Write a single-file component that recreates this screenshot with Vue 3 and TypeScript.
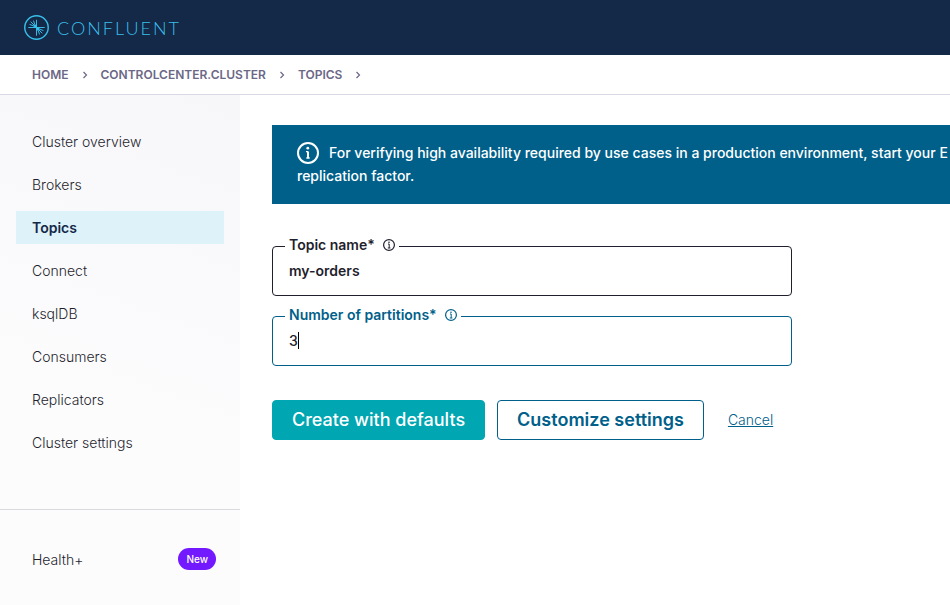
<script setup lang="ts">
import { ref } from 'vue'

interface NavItem {
  label: string
  active?: boolean
}

const crumbs: string[] = ['HOME', 'CONTROLCENTER.CLUSTER', 'TOPICS']

const navItems: NavItem[] = [
  { label: 'Cluster overview' },
  { label: 'Brokers' },
  { label: 'Topics', active: true },
  { label: 'Connect' },
  { label: 'ksqlDB' },
  { label: 'Consumers' },
  { label: 'Replicators' },
  { label: 'Cluster settings' },
]

const topicName = ref('my-orders')
const partitions = ref('3')
</script>

<template>
  <div class="app">
    <header class="topbar">
      <a class="brand" href="#">
        <svg class="brand-mark" viewBox="0 0 26 26" fill="none" stroke="currentColor">
          <circle cx="13" cy="13" r="12.200" stroke-width="1.500" />
          <path d="M13 5v16.500M4.500 13h17" stroke-width="1" />
          <path d="M12.500 12.500L7 7M12 12L5.800 9.800M12 12L9.800 5.800M13.500 13.500l5.500 5.500M14 14l6.200 2.200M14 14l2.200 6.200" stroke-width="1" />
          <path d="M13 9V13H9zM13 17V13h4z" fill="currentColor" stroke="none" />
        </svg>
        <span class="brand-name">CONFLUENT</span>
      </a>
    </header>

    <nav class="crumbs">
      <template v-for="crumb in crumbs" :key="crumb">
        <a class="crumb" href="#">{{ crumb }}</a>
        <svg class="chevron" viewBox="0 0 6 8" fill="none" stroke="currentColor" stroke-width="1.2">
          <path d="M1.500 1L4.500 4L1.500 7" />
        </svg>
      </template>
    </nav>

    <div class="body">
      <aside class="sidebar">
        <nav class="nav">
          <a
            v-for="item in navItems"
            :key="item.label"
            class="nav-link"
            :class="{ active: item.active }"
            href="#"
          >{{ item.label }}</a>
        </nav>
        <nav class="nav nav-extra">
          <a class="nav-link health" href="#">Health+<span class="badge">New</span></a>
        </nav>
      </aside>

      <main class="main">
        <div class="banner">
          <div class="banner-row">
            <svg class="banner-icon" viewBox="0 0 22 22" fill="none" stroke="currentColor">
              <circle cx="11" cy="11" r="10" stroke-width="2" />
              <path d="M11 9.500V16.500" stroke-width="2" />
              <path d="M9 9.700h2M9 16h4" stroke-width="1.200" />
              <circle cx="10.800" cy="6.200" r="1.400" fill="currentColor" stroke="none" />
            </svg>
            <span>For verifying high availability required by use cases in a production environment, start your E</span>
          </div>
          <div>replication factor.</div>
        </div>

        <form class="form" @submit.prevent>
          <div class="field">
            <label class="field-label" for="topic-name">
              Topic name*
              <svg class="info" viewBox="0 0 12 12" fill="none" stroke="currentColor">
                <circle cx="6" cy="6" r="5.400" stroke-width="1.200" />
                <path d="M5 5h1.200v4M4.800 9h2.600" stroke-width="1" />
                <circle cx="6" cy="3.200" r="0.800" fill="currentColor" stroke="none" />
              </svg>
            </label>
            <input id="topic-name" v-model="topicName" class="field-input" type="text" />
          </div>

          <div class="field focused">
            <label class="field-label" for="partitions">
              Number of partitions*
              <svg class="info" viewBox="0 0 12 12" fill="none" stroke="currentColor">
                <circle cx="6" cy="6" r="5.400" stroke-width="1.200" />
                <path d="M5 5h1.200v4M4.800 9h2.600" stroke-width="1" />
                <circle cx="6" cy="3.200" r="0.800" fill="currentColor" stroke="none" />
              </svg>
            </label>
            <input id="partitions" v-model="partitions" class="field-input" type="text" />
            <span class="caret" aria-hidden="true"></span>
          </div>

          <div class="actions">
            <button class="btn primary" type="submit">Create with defaults</button>
            <button class="btn outline" type="button">Customize settings</button>
            <a class="cancel" href="#">Cancel</a>
          </div>
        </form>
      </main>
    </div>
  </div>
</template>

<style>
body {
  margin: 0;
  background: #fff;
}
</style>

<style scoped>
.app {
  min-height: 100vh;
  display: flex;
  flex-direction: column;
  overflow: hidden;
  font-family: Inter, "Liberation Sans", sans-serif;
  font-size: 14px;
  line-height: 17px;
  color: #1f1f2e;
}

.app *,
.app {
  box-sizing: border-box;
}

a {
  color: inherit;
  text-decoration: none;
}

.topbar {
  height: 55px;
  padding: 0 24px;
  display: flex;
  align-items: center;
  background: #142848;
}

.brand {
  display: flex;
  align-items: center;
  gap: 8px;
  color: #38bfe8;
}

.brand-mark {
  width: 25px;
  height: 25px;
}

.brand-name {
  font-family: Lato, "Liberation Sans", sans-serif;
  font-size: 18px;
  line-height: 20px;
  font-weight: 300;
  letter-spacing: 2px;
}

.crumbs {
  height: 40px;
  padding: 0 32px;
  display: flex;
  align-items: center;
  gap: 13px;
  border-bottom: 1px solid #d9d9e5;
  font-size: 12px;
  font-weight: 600;
  color: #6b6786;
}

.chevron {
  width: 6px;
  height: 8px;
}

.body {
  flex: 1;
  display: flex;
}

.sidebar {
  flex: 0 0 240px;
  background: linear-gradient(200deg, #f7f7fa, #fcfcfd 60%);
}

.nav {
  padding: 30px 16px 50px;
  display: flex;
  flex-direction: column;
  gap: 10px;
}

.nav-link {
  padding: 8px 16px;
  font-weight: 300;
}

.nav-link.active {
  background: #def2fa;
  color: #142848;
  font-weight: 600;
}

.nav-extra {
  padding-top: 33px;
  border-top: 1px solid #d9d9de;
}

.health {
  display: flex;
  align-items: center;
  justify-content: space-between;
  padding: 5px 8px 5px 16px;
}

.badge {
  padding: 0 8px;
  border-radius: 11px;
  background: #7219ff;
  color: #fff;
  font-size: 10px;
  line-height: 22px;
  font-weight: 500;
}

.main {
  flex: 1;
  min-width: 0;
  padding: 30px 0 0 32px;
}

.banner {
  padding: 16px 0 17px 25px;
  overflow: hidden;
  white-space: nowrap;
  background: #00608a;
  color: #fff;
  font-weight: 500;
  line-height: 23px;
}

.banner-row {
  display: flex;
  align-items: center;
  gap: 10px;
}

.banner-icon {
  flex: none;
  width: 22px;
  height: 22px;
}

.form {
  max-width: 552px;
  padding: 42px 32px 0 0;
  display: flex;
  flex-direction: column;
  gap: 20px;
}

.field {
  position: relative;
}

.field-label {
  position: absolute;
  top: -10px;
  left: 13px;
  padding: 0 4px;
  display: flex;
  align-items: center;
  gap: 8px;
  background: #fff;
  font-weight: 600;
}

.info {
  width: 12px;
  height: 12px;
}

.field-input {
  display: block;
  width: 100%;
  height: 50px;
  padding: 0 16px 2px;
  border: 1px solid #1f1f2e;
  border-radius: 4px;
  outline: none;
  background: transparent;
  font: inherit;
  font-weight: 600;
  color: #1f1f2e;
}

.focused .field-label {
  color: #00608a;
}

.focused .field-input {
  border-color: #00608a;
  font-weight: 500;
  caret-color: transparent;
}

.caret {
  position: absolute;
  top: 16px;
  left: 26px;
  width: 1px;
  height: 17px;
  background: #000;
}

.actions {
  margin-top: 14px;
  display: flex;
  align-items: center;
  white-space: nowrap;
}

.btn {
  height: 40px;
  padding: 0 19px 2px;
  border: 1px solid #00608a;
  border-radius: 4px;
  background: #fff;
  color: #00608a;
  font: inherit;
  font-size: 18px;
  font-weight: 600;
}

.btn.primary {
  margin-right: 12px;
  border-color: #00a6b2;
  background: #00a6b2;
  color: #fff;
  font-weight: 500;
}

.cancel {
  margin-left: 24px;
  padding-bottom: 2px;
  color: #00608a;
  font-weight: 300;
  text-decoration: underline;
}
</style>
